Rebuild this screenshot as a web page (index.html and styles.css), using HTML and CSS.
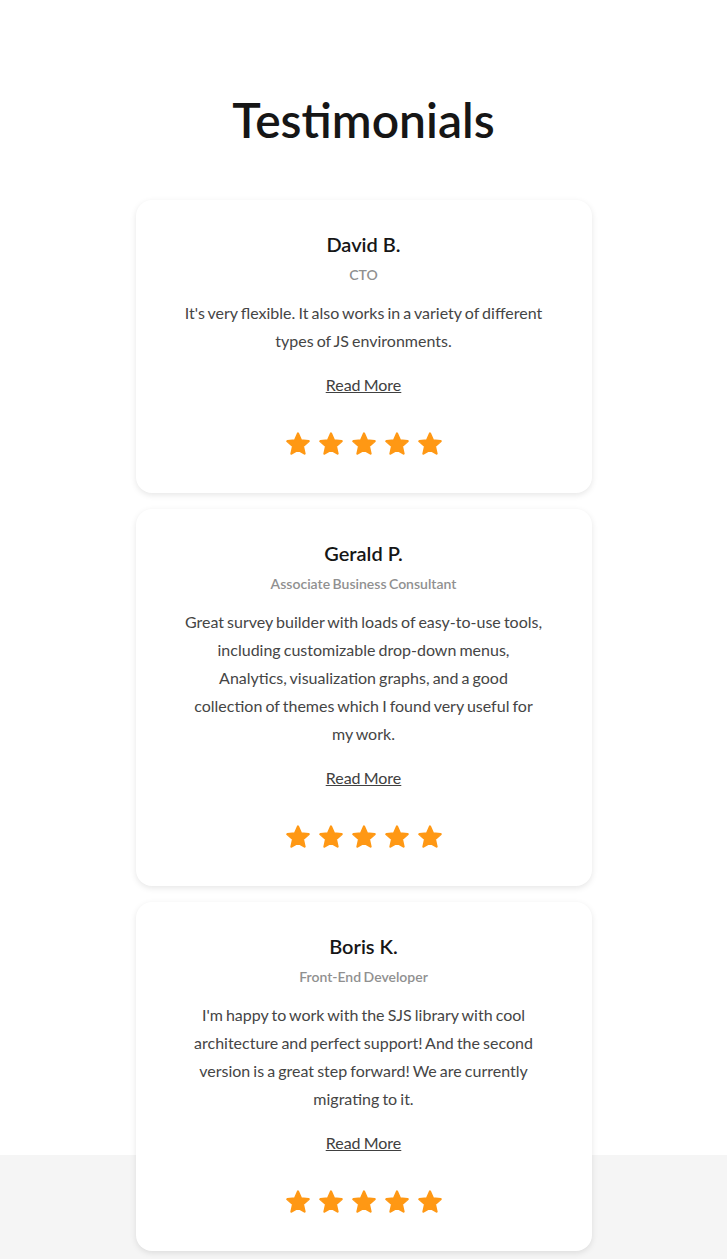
FILE: index.html
```html
<!DOCTYPE html>
<html lang="en">
<head>
<meta charset="utf-8">
<title>Testimonials</title>
<link rel="stylesheet" href="styles.css">
</head>
<body>
<section class="testimonials">
  <h1 class="heading">Testimonials</h1>
  <div class="list">
    <article class="card">
      <h2 class="name">David B.</h2>
      <div class="role">CTO</div>
      <p class="quote">It's very flexible. It also works in a variety of different types of JS environments.</p>
      <a class="more" href="#">Read More</a>
      <div class="stars">
        <svg class="star" viewBox="0 0 24 24"><path d="M12 1.4L15.06 8.39L22.65 9.14L16.95 14.21L18.58 21.66L12 17.8L5.42 21.66L7.05 14.21L1.35 9.14L8.94 8.39Z"/></svg>
        <svg class="star" viewBox="0 0 24 24"><path d="M12 1.4L15.06 8.39L22.65 9.14L16.95 14.21L18.58 21.66L12 17.8L5.42 21.66L7.05 14.21L1.35 9.14L8.94 8.39Z"/></svg>
        <svg class="star" viewBox="0 0 24 24"><path d="M12 1.4L15.06 8.39L22.65 9.14L16.95 14.21L18.58 21.66L12 17.8L5.42 21.66L7.05 14.21L1.35 9.14L8.94 8.39Z"/></svg>
        <svg class="star" viewBox="0 0 24 24"><path d="M12 1.4L15.06 8.39L22.65 9.14L16.95 14.21L18.58 21.66L12 17.8L5.42 21.66L7.05 14.21L1.35 9.14L8.94 8.39Z"/></svg>
        <svg class="star" viewBox="0 0 24 24"><path d="M12 1.4L15.06 8.39L22.65 9.14L16.95 14.21L18.58 21.66L12 17.8L5.42 21.66L7.05 14.21L1.35 9.14L8.94 8.39Z"/></svg>
      </div>
    </article>
    <article class="card">
      <h2 class="name">Gerald P.</h2>
      <div class="role">Associate Business Consultant</div>
      <p class="quote">Great survey builder with loads of easy-to-use tools, including customizable drop-down menus, Analytics, visualization graphs, and a good collection of themes which I found very useful for my work.</p>
      <a class="more" href="#">Read More</a>
      <div class="stars">
        <svg class="star" viewBox="0 0 24 24"><path d="M12 1.4L15.06 8.39L22.65 9.14L16.95 14.21L18.58 21.66L12 17.8L5.42 21.66L7.05 14.21L1.35 9.14L8.94 8.39Z"/></svg>
        <svg class="star" viewBox="0 0 24 24"><path d="M12 1.4L15.06 8.39L22.65 9.14L16.95 14.21L18.58 21.66L12 17.8L5.42 21.66L7.05 14.21L1.35 9.14L8.94 8.39Z"/></svg>
        <svg class="star" viewBox="0 0 24 24"><path d="M12 1.4L15.06 8.39L22.65 9.14L16.95 14.21L18.58 21.66L12 17.8L5.42 21.66L7.05 14.21L1.35 9.14L8.94 8.39Z"/></svg>
        <svg class="star" viewBox="0 0 24 24"><path d="M12 1.4L15.06 8.39L22.65 9.14L16.95 14.21L18.58 21.66L12 17.8L5.42 21.66L7.05 14.21L1.35 9.14L8.94 8.39Z"/></svg>
        <svg class="star" viewBox="0 0 24 24"><path d="M12 1.4L15.06 8.39L22.65 9.14L16.95 14.21L18.58 21.66L12 17.8L5.42 21.66L7.05 14.21L1.35 9.14L8.94 8.39Z"/></svg>
      </div>
    </article>
    <article class="card">
      <h2 class="name">Boris K.</h2>
      <div class="role">Front-End Developer</div>
      <p class="quote">I'm happy to work with the SJS library with cool architecture and perfect support! And the second version is a great step forward! We are currently migrating to it.</p>
      <a class="more" href="#">Read More</a>
      <div class="stars">
        <svg class="star" viewBox="0 0 24 24"><path d="M12 1.4L15.06 8.39L22.65 9.14L16.95 14.21L18.58 21.66L12 17.8L5.42 21.66L7.05 14.21L1.35 9.14L8.94 8.39Z"/></svg>
        <svg class="star" viewBox="0 0 24 24"><path d="M12 1.4L15.06 8.39L22.65 9.14L16.95 14.21L18.58 21.66L12 17.8L5.42 21.66L7.05 14.21L1.35 9.14L8.94 8.39Z"/></svg>
        <svg class="star" viewBox="0 0 24 24"><path d="M12 1.4L15.06 8.39L22.65 9.14L16.95 14.21L18.58 21.66L12 17.8L5.42 21.66L7.05 14.21L1.35 9.14L8.94 8.39Z"/></svg>
        <svg class="star" viewBox="0 0 24 24"><path d="M12 1.4L15.06 8.39L22.65 9.14L16.95 14.21L18.58 21.66L12 17.8L5.42 21.66L7.05 14.21L1.35 9.14L8.94 8.39Z"/></svg>
        <svg class="star" viewBox="0 0 24 24"><path d="M12 1.4L15.06 8.39L22.65 9.14L16.95 14.21L18.58 21.66L12 17.8L5.42 21.66L7.05 14.21L1.35 9.14L8.94 8.39Z"/></svg>
      </div>
    </article>
  </div>
</section>
</body>
</html>
```

FILE: styles.css
```css
* { box-sizing: border-box; }

html {
  margin: 0;
  padding: 0;
  min-height: 100%;
  background: linear-gradient(to bottom, #ffffff 0, #ffffff 1155px, #f5f5f5 1155px) no-repeat;
  background-color: #f5f5f5;
}

body {
  margin: 0;
  padding: 0;
  font-family: Lato, "Open Sans", "Liberation Sans", sans-serif;
  color: #161616;
}

.testimonials {
  padding: 91px 0 9px;
}

.heading {
  margin: 0 0 51px;
  font-size: 48px;
  line-height: 1.2;
  font-weight: 600;
  text-align: center;
  color: #161616;
}

.list {
  display: flex;
  flex-direction: column;
  align-items: center;
  gap: 16px;
}

.card {
  width: 456px;
  background: #ffffff;
  border-radius: 16px;
  box-shadow: 0 2px 6px rgba(0, 0, 0, 0.1);
  padding: 30px 49px 37px;
  display: flex;
  flex-direction: column;
  align-items: center;
  text-align: center;
}

.name {
  margin: 0;
  font-size: 20px;
  line-height: 28px;
  font-weight: 600;
  color: #161616;
}

.role {
  margin-top: 7px;
  font-size: 14px;
  line-height: 20px;
  font-weight: 600;
  word-spacing: -1px;
  color: #909090;
}

.quote {
  margin: 14px 0 0;
  font-size: 16px;
  line-height: 28px;
  word-spacing: -1px;
  color: #454545;
}

.more {
  margin-top: 18px;
  font-size: 16px;
  line-height: 24px;
  word-spacing: -1px;
  color: #404040;
  text-decoration: underline;
}

.stars {
  margin-top: 35px;
  display: flex;
  gap: 9px;
}

.star {
  width: 24px;
  height: 24px;
  fill: #ff9814;
  stroke: #ff9814;
  stroke-width: 2.2;
  stroke-linejoin: round;
}
```
